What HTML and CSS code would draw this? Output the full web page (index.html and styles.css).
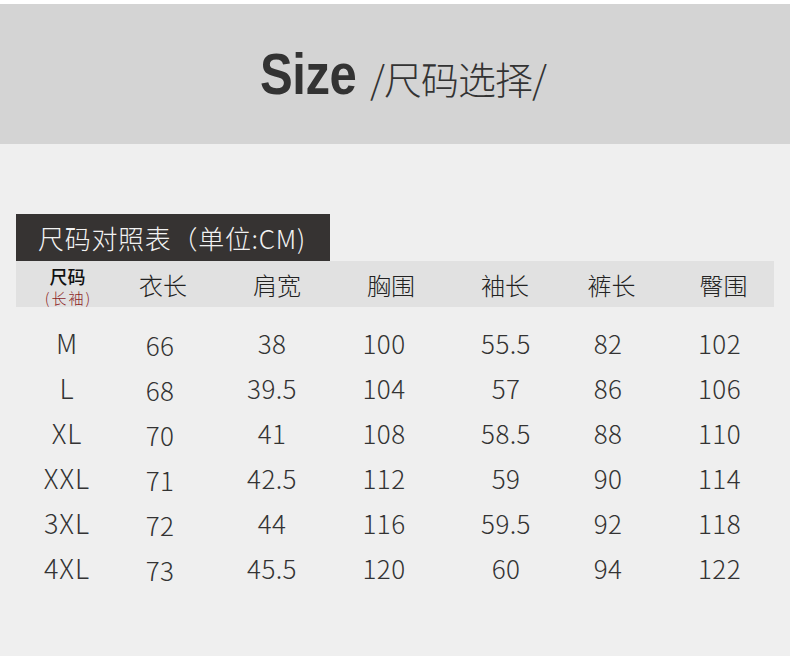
FILE: index.html
```html
<!DOCTYPE html>
<html lang="zh">
<head>
<meta charset="utf-8">
<title>Size 尺码选择</title>
<link rel="stylesheet" href="styles.css">
</head>
<body>
<div class="top-strip"></div>
<header class="banner">
  <h1 class="title"><span class="title-en">Size</span><span class="title-zh">/尺码选择/</span></h1>
</header>
<main class="content">
  <div class="tab">尺码对照表（单位:CM)</div>
  <div class="grid head">
    <div class="cell c1"><span class="h-size">尺码</span><span class="h-sub">(长袖)</span></div>
    <div class="cell c2">衣长</div>
    <div class="cell c3">肩宽</div>
    <div class="cell c4">胸围</div>
    <div class="cell c5">袖长</div>
    <div class="cell c6">裤长</div>
    <div class="cell c7">臀围</div>
  </div>
  <div class="rows">
    <div class="grid row"><div class="cell c1">M</div><div class="cell c2">66</div><div class="cell c3">38</div><div class="cell c4">100</div><div class="cell c5">55.5</div><div class="cell c6">82</div><div class="cell c7">102</div></div>
    <div class="grid row"><div class="cell c1">L</div><div class="cell c2">68</div><div class="cell c3">39.5</div><div class="cell c4">104</div><div class="cell c5">57</div><div class="cell c6">86</div><div class="cell c7">106</div></div>
    <div class="grid row"><div class="cell c1">XL</div><div class="cell c2">70</div><div class="cell c3">41</div><div class="cell c4">108</div><div class="cell c5">58.5</div><div class="cell c6">88</div><div class="cell c7">110</div></div>
    <div class="grid row"><div class="cell c1">XXL</div><div class="cell c2">71</div><div class="cell c3">42.5</div><div class="cell c4">112</div><div class="cell c5">59</div><div class="cell c6">90</div><div class="cell c7">114</div></div>
    <div class="grid row"><div class="cell c1">3XL</div><div class="cell c2">72</div><div class="cell c3">44</div><div class="cell c4">116</div><div class="cell c5">59.5</div><div class="cell c6">92</div><div class="cell c7">118</div></div>
    <div class="grid row"><div class="cell c1">4XL</div><div class="cell c2">73</div><div class="cell c3">45.5</div><div class="cell c4">120</div><div class="cell c5">60</div><div class="cell c6">94</div><div class="cell c7">122</div></div>
  </div>
</main>
</body>
</html>
```
FILE: styles.css
```css
* { box-sizing: border-box; }
html, body { margin: 0; padding: 0; }
body {
  background: #efefef;
  color: #333;
  font-family: "Noto Sans CJK SC", "Noto Sans", sans-serif;
  width: 790px;
  height: 656px;
  overflow: hidden;
}
.top-strip { height: 4px; background: #ffffff; }
.banner {
  height: 140px;
  background: #d4d4d4;
  display: flex;
  align-items: center;
  justify-content: center;
}
.title {
  margin: 0 0 0 16px;
  display: flex;
  align-items: baseline;
  color: #333;
  font-weight: normal;
}
.title-en {
  display: inline-block;
  font-family: "Liberation Sans", Arial, sans-serif;
  font-weight: bold;
  font-size: 57px;
  transform: scaleX(0.86);
  transform-origin: left center;
  margin-right: -2px;
  width: 112px;
  letter-spacing: -0.5px;
}
.title-zh {
  font-family: "Noto Sans CJK SC", sans-serif;
  font-weight: 300;
  font-size: 38px;
  letter-spacing: -1px;
}
.content { padding: 70px 16px 0 16px; }
.tab {
  width: 314px;
  height: 47px;
  background: #363332;
  color: #f2f2f2;
  font-size: 26px;
  font-weight: 300;
  padding: 6px 0 0 22px;
  line-height: 36px;
  letter-spacing: 0.7px;
  white-space: nowrap;
}
.grid {
  display: grid;
  grid-template-columns: 99px 105px 114px 114px 110px 109px 107px;
}
.head {
  height: 46px;
  background: #e1e1e1;
  align-items: center;
  font-size: 24px;
  font-weight: 300;
  color: #222;
}
.cell { text-align: center; }
.head .c1 {
  align-self: start;
  display: flex;
  flex-direction: column;
  align-items: center;
  gap: 3px;
  padding-left: 4px;
  padding-top: 5px;
}
.h-size { font-size: 18px; line-height: 20px; font-weight: 500; color: #111; }
.h-sub { font-size: 15px; line-height: 18px; color: #8c1e1e; letter-spacing: 2px; padding-left: 2px; }
.head .c2 { padding-right: 9px; }
.head .c5 { padding-left: 4px; }
.head .c6 { padding-right: 2px; }
.head .c7 { padding-left: 6px; }
.rows { padding-top: 10px; }
.row {
  height: 45px;
  align-items: center;
  font-size: 26px;
  font-weight: 300;
  color: #333;
  line-height: 45px;
  letter-spacing: 0.4px;
}
.row .c1 { padding-left: 3px; font-weight: 300; letter-spacing: 1px; font-size: 27px; }
.row .c2 { padding-right: 15px; padding-top: 5px; }
.row .c3 { padding-right: 10px; }
.row .c4 { padding-right: 14px; }
.row .c5 { padding-left: 6px; }
.row .c6 { padding-right: 9px; }
.row .c7 { padding-right: 2px; }
```
